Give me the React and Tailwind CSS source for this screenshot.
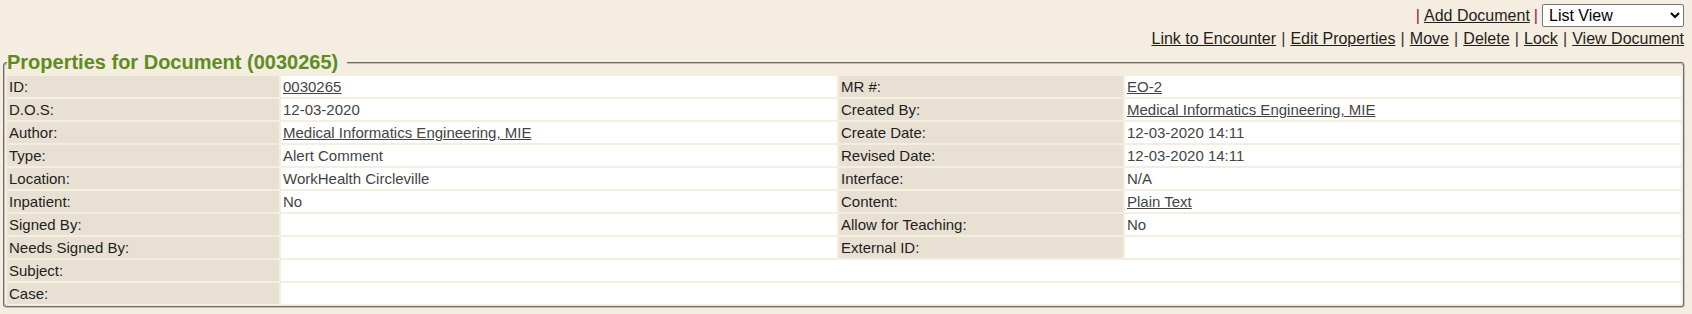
import { useState } from 'react';

const LEFT = [
    ['ID:', '0030265', true],
    ['D.O.S:', '12-03-2020'],
    ['Author:', 'Medical Informatics Engineering, MIE', true],
    ['Type:', 'Alert Comment'],
    ['Location:', 'WorkHealth Circleville'],
    ['Inpatient:', 'No'],
    ['Signed By:', ''],
    ['Needs Signed By:', ''],
];

const RIGHT = [
    ['MR #:', 'EO-2', true],
    ['Created By:', 'Medical Informatics Engineering, MIE', true],
    ['Create Date:', '12-03-2020 14:11'],
    ['Revised Date:', '12-03-2020 14:11'],
    ['Interface:', 'N/A'],
    ['Content:', 'Plain Text', true],
    ['Allow for Teaching:', 'No'],
    ['External ID:', ''],
];

const ACTIONS = ['Link to Encounter', 'Edit Properties', 'Move', 'Delete', 'Lock', 'View Document'];

function Value({ text, link }) {
    if (!text) return null;
    if (link) return <a href="#" className="underline text-[#444]">{text}</a>;
    return <span>{text}</span>;
}

const lbl = 'bg-[#e8e1d3] text-[#1e1e1e] h-[21px] px-[2px] py-0 align-middle';
const val = 'bg-white text-[#444] h-[21px] px-[2px] py-0 align-middle';

export default function App() {
    const [view, setView] = useState('list');

    return (
        <div className="min-h-screen bg-[#f5eddf] font-['Liberation_Sans',Arial,sans-serif]">
            <div className="flex flex-col items-end pr-[8px] pt-[4px] h-[52px]">
                <div className="flex items-center gap-[4px] text-[16px] leading-[23px]">
                    <span className="text-[#8b1c4f]">|</span>
                    <a href="#" className="underline text-[#1e1e1e]">Add Document</a>
                    <span className="text-[#8b1c4f]">|</span>
                    <select value={view} onChange={e => setView(e.target.value)}
                        className="h-[23px] w-[142px] bg-white border border-[#767676] rounded-[2px] pl-[2px] text-[16px] text-black">
                        <option value="list">List View</option>
                        <option value="tree">Tree View</option>
                    </select>
                </div>
                <div className="text-[16px] leading-[20px] mt-[2px] text-[#1e1e1e]">
                    {ACTIONS.map((a, i) => (
                        <span key={a}>
                            {i > 0 && <span className="text-[#333] px-[0.7px]"> | </span>}
                            <a href="#" className="underline">{a}</a>
                        </span>
                    ))}
                </div>
            </div>

            <fieldset className="ml-[3px] mr-[7px] border-2 [border-style:groove] border-[#c0c0c0] rounded-[4px] pt-[1px]">
                <legend className="ml-[2px] pr-[9px] text-[20px] leading-[21px] font-bold text-[#5e8c1f]">
                    Properties for Document (0030265)
                </legend>
                <table className="w-full table-fixed border-separate border-spacing-[2px] text-[15px] leading-[17px]">
                    <colgroup>
                        <col className="w-[272px]" />
                        <col className="w-[556px]" />
                        <col className="w-[284px]" />
                        <col />
                    </colgroup>
                    <tbody>
                        {LEFT.map((row, i) => (
                            <tr key={row[0]}>
                                <td className={lbl}>{row[0]}</td>
                                <td className={val}><Value text={row[1]} link={row[2]} /></td>
                                <td className={lbl}>{RIGHT[i][0]}</td>
                                <td className={val}><Value text={RIGHT[i][1]} link={RIGHT[i][2]} /></td>
                            </tr>
                        ))}
                        <tr>
                            <td className={lbl}>Subject:</td>
                            <td className={val} colSpan={3}></td>
                        </tr>
                        <tr>
                            <td className={lbl}>Case:</td>
                            <td className={val} colSpan={3}></td>
                        </tr>
                    </tbody>
                </table>
            </fieldset>
        </div>
    );
}
